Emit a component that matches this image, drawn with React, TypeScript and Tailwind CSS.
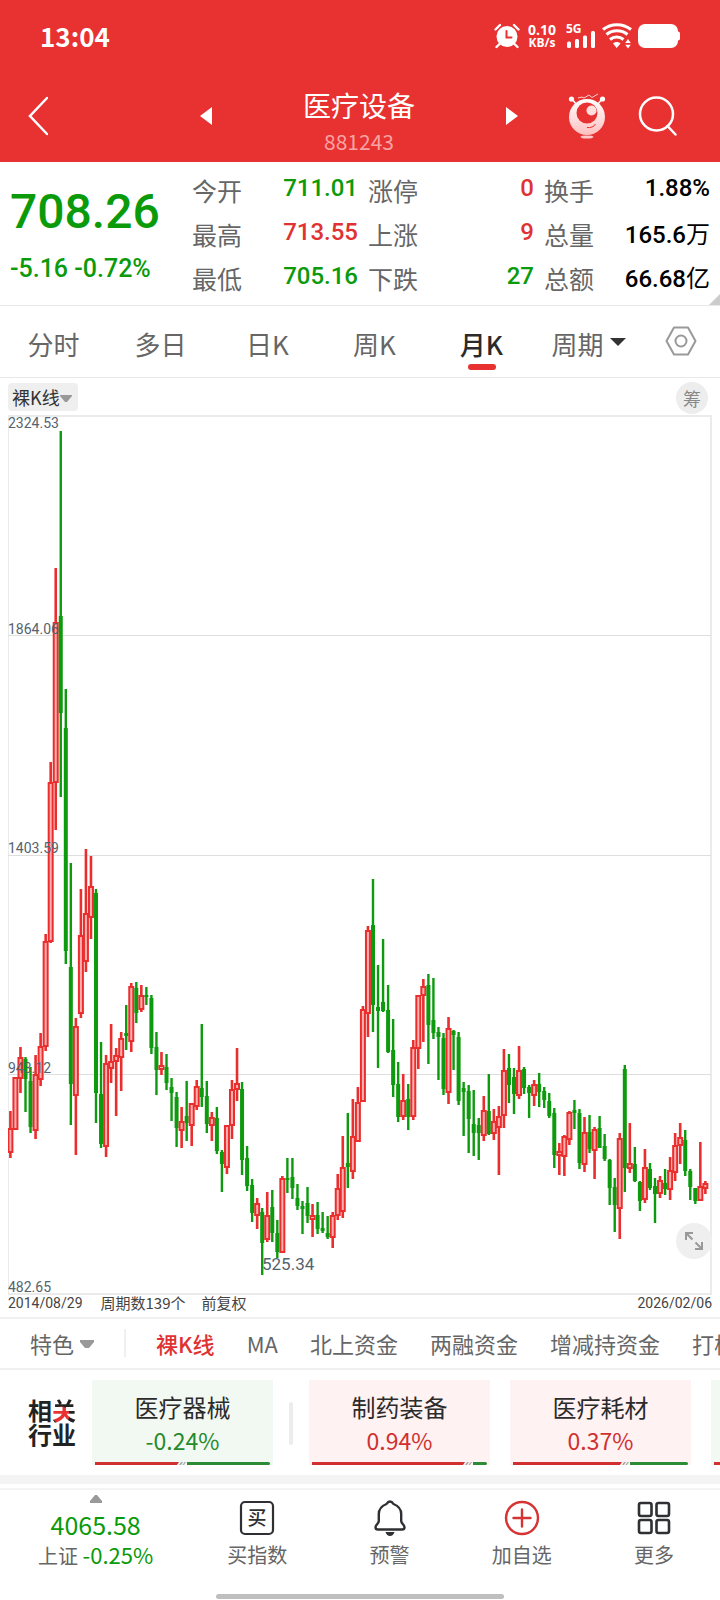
import { useState } from 'react';

type Candle = [dir: 'u' | 'd', high: number, top: number, bottom: number, low: number];

// one entry per month: direction, wick top, body top, body bottom, wick bottom
const candles: Candle[] = [
  ['u', 696, 714, 737, 743], ['u', 663, 663, 714, 714], ['u', 632, 643, 663, 678], ['d', 642, 644, 664, 697],
  ['d', 652, 666, 712, 718], ['u', 640, 660, 715, 724], ['u', 618, 632, 664, 671], ['u', 519, 527, 631, 636],
  ['u', 347, 368, 526, 528], ['u', 153, 208, 367, 415], ['d', 16, 201, 298, 382], ['d', 274, 313, 536, 549],
  ['d', 448, 552, 669, 710], ['u', 603, 612, 680, 740], ['u', 474, 521, 598, 603], ['u', 434, 499, 546, 557],
  ['u', 441, 472, 502, 524], ['d', 474, 478, 678, 708], ['d', 627, 679, 729, 733], ['u', 640, 649, 731, 742],
  ['u', 609, 647, 653, 668], ['u', 633, 641, 646, 701], ['u', 617, 624, 642, 676], ['d', 590, 618, 621, 635],
  ['u', 568, 572, 626, 637], ['d', 567, 573, 598, 608], ['u', 570, 581, 594, 597], ['d', 572, 580, 582, 590],
  ['d', 580, 583, 633, 639], ['d', 617, 632, 655, 680], ['u', 637, 651, 654, 660], ['d', 639, 652, 668, 675],
  ['d', 663, 672, 678, 706], ['d', 677, 682, 713, 732], ['u', 692, 707, 715, 733], ['d', 666, 701, 708, 726],
  ['u', 688, 689, 710, 731], ['u', 665, 672, 691, 695], ['d', 609, 673, 682, 692], ['d', 666, 681, 709, 718],
  ['u', 697, 703, 710, 726], ['d', 692, 703, 736, 739], ['d', 735, 737, 749, 777], ['u', 710, 711, 752, 759],
  ['u', 665, 675, 710, 724], ['u', 633, 669, 674, 686], ['d', 667, 674, 745, 760], ['d', 731, 743, 771, 776],
  ['d', 764, 770, 798, 807], ['u', 783, 789, 800, 814], ['d', 793, 797, 828, 860], ['u', 777, 801, 824, 827],
  ['d', 775, 792, 818, 827], ['d', 805, 818, 837, 843], ['u', 761, 764, 837, 838], ['d', 743, 763, 765, 778],
  ['d', 743, 762, 773, 784], ['d', 769, 783, 791, 795], ['d', 786, 791, 794, 819], ['d', 772, 788, 801, 808],
  ['u', 789, 801, 804, 822], ['d', 787, 800, 814, 819], ['d', 797, 813, 816, 818], ['d', 801, 818, 822, 824],
  ['u', 797, 801, 822, 833], ['u', 759, 774, 800, 805], ['u', 721, 753, 796, 803], ['d', 698, 748, 752, 773],
  ['u', 684, 722, 756, 764], ['u', 672, 688, 726, 727], ['u', 591, 595, 686, 687], ['u', 511, 516, 598, 622],
  ['d', 464, 510, 590, 617], ['d', 550, 592, 596, 653], ['d', 524, 587, 596, 597], ['d', 570, 595, 637, 638],
  ['d', 604, 635, 670, 682], ['d', 647, 669, 702, 707], ['u', 659, 686, 701, 705], ['d', 669, 684, 702, 715],
  ['u', 625, 633, 701, 705], ['u', 581, 581, 633, 654], ['u', 564, 572, 580, 627], ['d', 559, 570, 610, 649],
  ['d', 563, 605, 618, 624], ['d', 612, 617, 622, 665], ['d', 618, 623, 674, 680], ['u', 602, 614, 677, 689],
  ['d', 615, 616, 620, 655], ['d', 617, 622, 686, 690], ['d', 667, 673, 677, 721], ['d', 670, 676, 704, 738],
  ['d', 675, 709, 718, 741], ['d', 703, 710, 718, 745], ['u', 681, 696, 720, 726], ['d', 659, 696, 719, 720],
  ['u', 694, 707, 718, 725], ['u', 691, 702, 712, 760], ['u', 634, 656, 700, 713], ['d', 639, 653, 670, 688],
  ['d', 653, 662, 679, 699], ['u', 631, 656, 680, 684], ['d', 652, 654, 673, 679], ['d', 670, 672, 678, 703],
  ['u', 665, 670, 680, 691], ['d', 658, 669, 677, 692], ['d', 672, 676, 685, 693], ['d', 678, 686, 701, 703],
  ['d', 693, 698, 740, 753], ['u', 728, 737, 740, 760], ['u', 720, 722, 741, 761], ['u', 696, 698, 724, 730],
  ['d', 685, 695, 698, 714], ['d', 694, 698, 748, 754], ['u', 702, 718, 749, 757], ['d', 700, 717, 734, 738],
  ['u', 712, 715, 735, 764], ['d', 701, 713, 733, 733], ['d', 719, 731, 744, 746], ['d', 744, 745, 773, 790],
  ['d', 763, 772, 790, 817], ['u', 718, 724, 793, 824], ['d', 650, 654, 753, 777], ['u', 708, 749, 753, 758],
  ['d', 732, 749, 766, 767], ['d', 766, 767, 786, 796], ['u', 734, 753, 784, 788], ['d', 748, 754, 773, 775],
  ['d', 763, 771, 779, 808], ['u', 761, 766, 778, 783], ['d', 754, 768, 774, 780], ['u', 742, 756, 774, 785],
  ['u', 718, 731, 757, 766], ['u', 708, 723, 730, 749], ['d', 715, 725, 756, 761], ['d', 754, 756, 772, 785],
  ['d', 773, 773, 786, 789], ['u', 727, 772, 785, 785], ['u', 766, 769, 773, 779],
];

const axis = [
  { label: '2324.53', y: 13 },
  { label: '1864.06', y: 219 },
  { label: '1403.59', y: 438 },
  { label: '943.12', y: 658 },
  { label: '482.65', y: 877 },
];

const quotes = [
  [
    { name: '今开', value: '711.01', color: 'text-[#0a9a0a]' },
    { name: '最高', value: '713.55', color: 'text-[#e03232]' },
    { name: '最低', value: '705.16', color: 'text-[#0a9a0a]' },
  ],
  [
    { name: '涨停', value: '0', color: 'text-[#e03232]' },
    { name: '上涨', value: '9', color: 'text-[#e03232]' },
    { name: '下跌', value: '27', color: 'text-[#0a9a0a]' },
  ],
  [
    { name: '换手', value: '1.88%', color: 'text-black' },
    { name: '总量', value: '165.6', unit: '万', color: 'text-black' },
    { name: '总额', value: '66.68', unit: '亿', color: 'text-black' },
  ],
];

const periods = ['分时', '多日', '日K', '周K', '月K'];
const features = ['裸K线', 'MA', '北上资金', '两融资金', '增减持资金', '打板'];

function StatusBar() {
  return (
    <div className="flex h-[72px] items-center justify-between pl-10 pr-10 text-white">
      <span className="text-[26px] font-bold leading-8">13:04</span>
      <div className="flex items-center gap-1.5">
        <svg className="mr-0.5 h-[26px] w-[26px]" viewBox="0 0 26 26" fill="none" stroke="#fff" strokeWidth="2.4" strokeLinecap="round">
          <circle cx="13" cy="13.5" r="10.5" fill="#fff" stroke="none" />
          <path d="M1.500 6.500 6 2M24.500 6.500 20 2M5.500 21 2.500 24M20.500 21l3 3" />
          <path d="M12.500 8v6.500h5" stroke="#e83131" strokeWidth="2" />
        </svg>
        <div className="text-center font-['Open_Sans',sans-serif] font-bold">
          <div className="text-sm leading-[13px]">0.10</div>
          <div className="text-xs leading-[13px]">KB/s</div>
        </div>
        <svg className="ml-1 h-8 w-[30px]" viewBox="0 0 30 32" fill="#fff">
          <text x="0" y="13" className="font-['Open_Sans',sans-serif] text-xs font-bold">5G</text>
          <rect x="1" y="21.500" width="4" height="6.500" rx="1.500" />
          <rect x="9" y="19" width="4" height="9" rx="1.500" />
          <rect x="17" y="15.500" width="4" height="12.500" rx="1.500" />
          <rect x="25" y="11" width="4" height="17" rx="1.500" />
        </svg>
        <svg className="h-[26px] w-[30px]" viewBox="0 0 30 26" fill="none" stroke="#fff" strokeWidth="3">
          <path d="M1 6.500c8-6.500 20-6.500 28 0M4.500 11.500c6-5 15-5 21 0M8 16.500c4-3.500 9.500-3.500 13.500 0" />
          <path d="M11 20.500c2-2 5.500-2 7.500 0L14.700 25ZM26 16l2.800 4h-5.600ZM26 25.500l2.800-3.800h-5.600Z" fill="#fff" stroke="none" />
        </svg>
        <svg className="h-6 w-[42px]" viewBox="0 0 42 24" fill="#fff">
          <rect width="40" height="24" rx="7" />
          <rect x="36" y="7.500" width="6" height="9" rx="2" />
        </svg>
      </div>
    </div>
  );
}

function Header() {
  return (
    <header className="bg-[#e83131]">
      <StatusBar />
      <div className="flex h-[90px] items-center pl-7 pr-[42px] pb-0.5 text-white">
        <button aria-label="返回" className="mr-[152px]">
          <svg className="h-10 w-5" viewBox="0 0 20 40" fill="none" stroke="#fff" strokeWidth="2.500" strokeLinecap="round">
            <path d="M19 2 2 20l17 18" />
          </svg>
        </button>
        <button aria-label="上一个">
          <svg className="h-5 w-3" viewBox="0 0 12 20" fill="#fff">
            <path d="M12 1v18L0 10Z" />
          </svg>
        </button>
        <div className="flex-1 pt-3.5 text-center">
          <h1 className="text-[28px] leading-9">医疗设备</h1>
          <div className="text-[21px] leading-9 text-[#f8a3a3]">881243</div>
        </div>
        <button aria-label="下一个" className="mr-[50px]">
          <svg className="h-5 w-3" viewBox="0 0 12 20" fill="#fff">
            <path d="M0 1v18l12-9Z" />
          </svg>
        </button>
        <button aria-label="助手" className="mr-8">
          <svg className="h-[46px] w-[38px]" viewBox="0 0 38 46" fill="none">
            <defs>
              <linearGradient id="bot" x1="0" y1="0" x2="0" y2="1">
                <stop offset="0" stopColor="#fff" />
                <stop offset="1" stopColor="#ffc0c0" />
              </linearGradient>
            </defs>
            <path d="m4 6 4 5M34 6l-4 5" stroke="#fff" strokeWidth="1.500" />
            <circle cx="3.500" cy="6" r="2.600" fill="#fff" />
            <circle cx="34.500" cy="6" r="2.600" fill="#fff" />
            <path d="m10 5 4-1 2 1 5-3 3 2.500 6-3.500" stroke="#ffd5d5" strokeWidth="1" />
            <circle cx="19" cy="24" r="18" fill="url(#bot)" />
            <circle cx="19" cy="20" r="10.500" fill="#e83131" />
            <circle cx="23.500" cy="17.500" r="5" fill="#ffdede" />
            <path d="M19 34.500c3.500.5 7-.5 8.500-3.500" stroke="#e83131" strokeWidth="1" />
            <ellipse cx="19" cy="44" rx="6.500" ry="1.600" fill="#ffc9c9" />
          </svg>
        </button>
        <button aria-label="搜索">
          <svg className="h-10 w-10" viewBox="0 0 40 40" fill="none" stroke="#fff" strokeWidth="2.500" strokeLinecap="round">
            <circle cx="18.500" cy="18" r="16.500" />
            <path d="m29.500 30 8 8.500" />
          </svg>
        </button>
      </div>
    </header>
  );
}

function QuotePanel() {
  return (
    <section className="relative flex h-36 border-b border-[#e8e8e8] px-2.5">
      <div className="w-[182px] font-[Roboto,sans-serif] font-medium text-[#0a9a0a]">
        <div className="pt-5 text-5xl leading-[60px]">708.26</div>
        <div className="mt-1.5 text-[25px] leading-[42px]">-5.16 -0.72%</div>
      </div>
      <div className="grid flex-1 grid-cols-3 gap-x-2.5 pt-1.5">
        {quotes.map((col) => (
          <dl key={col[0].name}>
            {col.map((q) => (
              <div key={q.name} className="flex h-11 justify-between">
                <dt className="text-[25px] leading-[44px] text-[#666]">{q.name}</dt>
                <dd className={`font-[Roboto,'Noto_Sans_CJK_SC',sans-serif] text-2xl font-medium ${q.color}`}>
                  {'unit' in q ? (
                    <span className="leading-[46px]">
                      {q.value}
                      <span className="font-normal">{q.unit}</span>
                    </span>
                  ) : (
                    <span className="leading-[40px]">{q.value}</span>
                  )}
                </dd>
              </div>
            ))}
          </dl>
        ))}
      </div>
      <svg className="absolute bottom-0 right-0 h-[11px] w-[11px]" viewBox="0 0 11 11" fill="#ccc">
        <path d="M11 0v11H0Z" />
      </svg>
    </section>
  );
}

function PeriodTabs() {
  const [active, setActive] = useState('月K');
  return (
    <nav className="flex h-[72px] border-b border-[#e8e8e8] text-[26px] text-[#666]">
      {periods.map((p) => (
        <button
          key={p}
          onClick={() => setActive(p)}
          className={`flex flex-1 flex-col items-center pt-5 leading-9 ${p === active ? 'font-medium text-[#2b2b2b]' : ''}`}
        >
          {p}
          {p === active && <span className="mt-0.5 h-1.5 w-7 rounded-full bg-[#e83131]" />}
        </button>
      ))}
      <button className="flex flex-1 justify-center pt-5 leading-9">
        周期
        <svg className="ml-1.5 mt-3 h-2 w-4" viewBox="0 0 16 8" fill="#333">
          <path d="M0 0h16L8 8Z" />
        </svg>
      </button>
      <button aria-label="设置" className="flex w-[78px] justify-center pt-5">
        <svg className="h-[30px] w-8" viewBox="0 0 32 30" fill="none" stroke="#999" strokeWidth="2">
          <path d="M9 1.500h14L30.500 15 23 28.500H9L1.500 15Z" strokeLinejoin="round" />
          <circle cx="16" cy="15" r="5.500" />
        </svg>
      </button>
    </nav>
  );
}

function KLineChart() {
  return (
    <section>
      <div className="flex h-[37px] items-center justify-between pl-2 pr-3">
        <button className="flex h-7 items-center rounded bg-[#efefef] pl-1 text-lg leading-6 text-[#333]">
          裸K线
          <svg className="mr-1.5 mt-1 h-2 w-3" viewBox="0 0 12 8" fill="#999">
            <path d="M0 0h12v1L7 7H5L0 1Z" />
          </svg>
        </button>
        <button className="mt-0.5 h-8 w-8 rounded-full bg-[#ededed] text-lg leading-8 text-[#888]">筹</button>
      </div>
      <div className="relative mx-2">
        <svg className="block w-full" viewBox="0 0 704 880">
          <rect x="0" y="1" width="703" height="878" fill="none" stroke="#ebebeb" strokeWidth="2" />
          <path d="M0 220.500h703M0 440.500h703M0 659.500h703" stroke="#dedede" strokeWidth="1" />
          {candles.map(([dir, high, top, bottom, low], i) => {
            const x = 2.4 + i * 5.036;
            return dir === 'u' ? (
              <g key={i} stroke="#ea2e2e">
                <path d={`M${x} ${high}V${top}M${x} ${bottom}V${low}`} strokeWidth="2.600" />
                <rect x={x - 2} y={top} width="4" height={bottom - top} fill="#ffb0b0" strokeWidth="2" />
              </g>
            ) : (
              <g key={i} fill="#0e9a0e">
                <rect x={x - 1.2} y={high} width="2.400" height={low - high} />
                <rect x={x - 2} y={top} width="4" height={bottom - top} />
              </g>
            );
          })}
          <g className="font-[Roboto,sans-serif] text-[14px]" fill="#54636f">
            {axis.map((a) => (
              <text key={a.label} x="0" y={a.y}>{a.label}</text>
            ))}
            <text x="254" y="855" className="text-[17px]">525.34</text>
          </g>
        </svg>
        <button aria-label="全屏" className="absolute bottom-9 right-0 flex h-9 w-9 items-center justify-center rounded-full bg-[#efefef]">
          <svg className="h-5 w-5" viewBox="0 0 20 20" fill="none" stroke="#999" strokeWidth="2">
            <path d="M2 9V2h7M2.500 2.500 8.500 8.500M18 11v7h-7M17.500 17.500l-6-6" />
          </svg>
        </button>
      </div>
      <div className="flex h-6 items-center border-b-2 border-[#f0f0f0] px-2 pb-1.5 text-[15px] leading-4 text-[#444]">
        <span className="font-[Roboto,sans-serif] text-sm leading-4">2014/08/29</span>
        <span className="ml-[18px]">周期数139个</span>
        <span className="ml-4">前复权</span>
        <span className="ml-auto font-[Roboto,sans-serif] text-sm leading-4">2026/02/06</span>
      </div>
    </section>
  );
}

function FeatureBar() {
  const [active, setActive] = useState('裸K线');
  return (
    <nav className="flex h-[51px] items-center overflow-hidden whitespace-nowrap border-b-2 border-[#f0f0f0] pb-0.5 pl-[30px] text-[22px] leading-8 text-[#666]">
      <button className="flex shrink-0 items-center">
        特色
        <svg className="ml-1.5 mt-1 h-[9px] w-[14px]" viewBox="0 0 14 9" fill="#999">
          <path d="M0 0h14v2L9 8H5L0 2Z" />
        </svg>
      </button>
      <span className="ml-[30px] h-7 w-0.5 shrink-0 bg-[#f0f0f0]" />
      <div className="ml-[30px] flex shrink-0 gap-8">
        {features.map((f) => (
          <button key={f} onClick={() => setActive(f)} className={f === active ? 'font-medium text-[#e03232]' : ''}>
            {f}
          </button>
        ))}
      </div>
    </nav>
  );
}

function SectorCard({ name, change, up, ratio }: { name: string; change: string; up: boolean; ratio: number }) {
  return (
    <a href="#" className={`flex h-[85px] w-[181px] shrink-0 flex-col items-center px-[3px] pt-2.5 ${up ? 'bg-[#fff2f2]' : 'bg-[#f2f9f3]'}`}>
      <span className="text-2xl leading-[34px] text-[#2b2b2b]">{name}</span>
      <span className={`text-[23px] leading-8 ${up ? 'text-[#d03030]' : 'text-[#258a2b]'}`}>{change}</span>
      <span className="mt-auto flex h-[3px] w-full">
        <span className="bg-[#d03030]" style={{ width: `${ratio}%` }} />
        <svg className="h-[3px] w-[10px] shrink-0" viewBox="0 0 10 3" fill="#aaa">
          <path d="M0 0h2L0 3Z" fill="#d03030" />
          <path d="M4 0h2L4 3H2ZM7.500 0h1.500l-2 3H5.500Z" />
        </svg>
        <span className="flex-1 rounded-r-full bg-[#2d8a35]" />
      </span>
    </a>
  );
}

function RelatedSectors() {
  return (
    <section className="flex h-[105px] overflow-hidden pl-7 pt-2.5">
      <h2 className="mr-4 w-12 shrink-0 pt-[18px] text-2xl font-bold leading-6 text-[#222]">
        相
        <span className="bg-[radial-gradient(circle_at_9px_23px,#e83131_8px,#222_9px)] bg-clip-text text-transparent">关</span>
        <br />
        行业
      </h2>
      <SectorCard name="医疗器械" change="-0.24%" up={false} ratio={47} />
      <span className="ml-4 mr-4 mt-[22px] h-[43px] w-1 shrink-0 rounded-sm bg-[#ececec]" />
      <div className="flex shrink-0 gap-5">
        <SectorCard name="制药装备" change="0.94%" up ratio={86} />
        <SectorCard name="医疗耗材" change="0.37%" up ratio={61} />
        {/* peeks in from the right edge */}
        <div className="h-[85px] w-[181px] shrink-0 bg-[#f2f9f3] px-[3px] pt-[82px]">
          <div className="h-[3px] w-2/5 bg-[#d03030]" />
        </div>
      </div>
    </section>
  );
}

function BottomNav() {
  return (
    <footer>
      <div className="h-[9px] bg-[#f4f4f4]" />
      <nav className="mt-1 grid grid-cols-[191fr_132fr_132fr_132fr_132fr] border-t-2 border-[#f4f4f4] text-xl leading-7 text-[#666]">
        <button className="flex flex-col items-center pt-[5px]">
          <svg className="h-2 w-3" viewBox="0 0 12 8" fill="#999">
            <path d="M5 0h2l5 6v2H0V6Z" />
          </svg>
          <span className="mt-[5px] text-[25px] leading-8 text-[#0a9a0a]">4065.58</span>
          <span className="leading-7">
            上证 <span className="text-[22px] text-[#0a9a0a]">-0.25%</span>
          </span>
        </button>
        <button className="flex flex-col items-center pt-2.5">
          <svg className="h-9 w-9" viewBox="0 0 36 36" fill="none" stroke="#2f3033" strokeWidth="2.200">
            <rect x="2" y="2" width="32" height="32" rx="4" />
            <text x="18" y="25" textAnchor="middle" fill="#2f3033" stroke="none" className="text-[19px] font-medium">买</text>
          </svg>
          <span className="mt-[5px]">买指数</span>
        </button>
        <button className="flex flex-col items-center pt-2.5">
          <svg className="h-9 w-9" viewBox="0 0 36 36" fill="none" stroke="#2f3033" strokeWidth="2.400" strokeLinejoin="round">
            <path d="M18 1.500c-1.800 0-2.600 1-3.500 2.500C9.500 6 6.800 9.500 6.800 14v7c0 2.500-3.300 4-3.300 6.200 0 1.300.8 2.300 2.500 2.300h24c1.700 0 2.500-1 2.500-2.300 0-2.200-3.300-3.700-3.300-6.200v-7c0-4.500-2.700-8-7.700-10-.9-1.500-1.700-2.500-3.500-2.500Z" />
            <path d="M13.500 32h9c-.9 2.500-2.300 4-4.500 4s-3.600-1.500-4.500-4Z" fill="#2f3033" stroke="none" />
          </svg>
          <span className="mt-[5px]">预警</span>
        </button>
        <button className="flex flex-col items-center pt-2.5">
          <svg className="h-9 w-9" viewBox="0 0 36 36" fill="none" stroke="#d63434" strokeWidth="2.400">
            <circle cx="18" cy="18" r="16" />
            <path d="M18 9.500v17M9.500 18h17" strokeLinecap="round" />
          </svg>
          <span className="mt-[5px]">加自选</span>
        </button>
        <button className="flex flex-col items-center pt-2.5">
          <svg className="h-9 w-9" viewBox="0 0 36 36" fill="none" stroke="#2f3033" strokeWidth="2.600">
            <rect x="3" y="3" width="12.500" height="13" rx="2" />
            <rect x="20.500" y="3" width="12.500" height="13" rx="2" />
            <rect x="3" y="20" width="12.500" height="13" rx="2" />
            <rect x="20.500" y="20" width="12.500" height="13" rx="2" />
          </svg>
          <span className="mt-[5px]">更多</span>
        </button>
      </nav>
      <div className="mx-auto mb-0.5 mt-6 h-[5px] w-2/5 rounded-full bg-[#bfbfbf]" />
    </footer>
  );
}

export default function App() {
  return (
    <div className="overflow-x-hidden bg-white font-['Noto_Sans_CJK_SC',sans-serif]">
      <Header />
      <QuotePanel />
      <PeriodTabs />
      <KLineChart />
      <FeatureBar />
      <RelatedSectors />
      <BottomNav />
    </div>
  );
}
